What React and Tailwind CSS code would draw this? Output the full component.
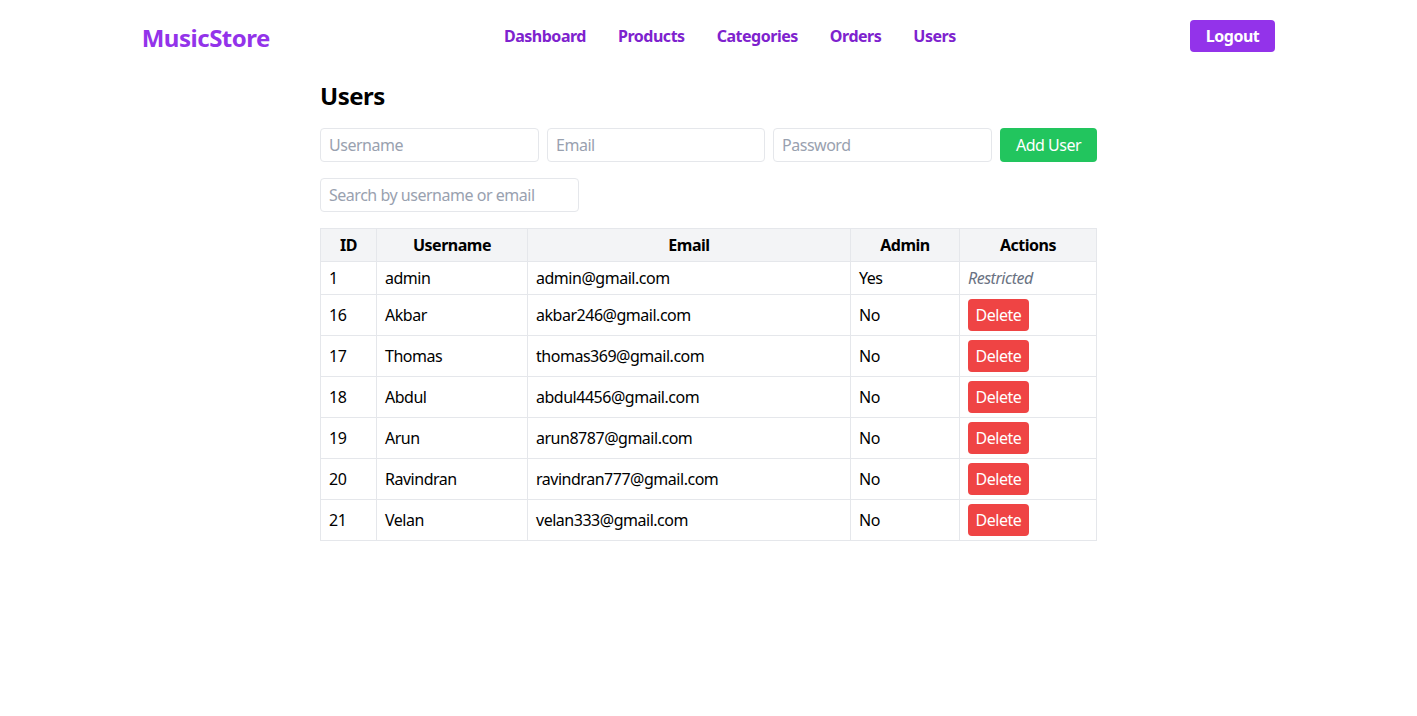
import React from "react";

const users = [
  { id: 1, username: "admin", email: "admin@gmail.com", admin: true },
  { id: 16, username: "Akbar", email: "akbar246@gmail.com", admin: false },
  { id: 17, username: "Thomas", email: "thomas369@gmail.com", admin: false },
  { id: 18, username: "Abdul", email: "abdul4456@gmail.com", admin: false },
  { id: 19, username: "Arun", email: "arun8787@gmail.com", admin: false },
  { id: 20, username: "Ravindran", email: "ravindran777@gmail.com", admin: false },
  { id: 21, username: "Velan", email: "velan333@gmail.com", admin: false },
];

export default function App() {
  return (
    <div className="min-h-screen bg-white text-black tracking-[-0.03em]" style={{ fontFamily: '"Noto Sans", "Open Sans", sans-serif' }}>
      <nav className="flex items-center justify-between px-[10%] py-5">
        <div className="text-2xl font-bold leading-8 text-[#9333ea] translate-y-[2px]">MusicStore</div>
        <div className="flex items-center gap-8 font-bold text-[#7e22ce]">
          <a>Dashboard</a>
          <a>Products</a>
          <a>Categories</a>
          <a>Orders</a>
          <a>Users</a>
        </div>
        <button className="h-8 rounded bg-[#9333ea] px-4 font-bold text-white">Logout</button>
      </nav>

      <main className="mx-auto w-[777px] pt-[8px]">
        <h1 className="mb-4 text-2xl font-bold leading-8">Users</h1>
        <div className="mb-4 flex gap-2">
          <input className="h-[34px] w-[219px] min-w-0 rounded border border-gray-200 px-2 placeholder-gray-400 outline-none" placeholder="Username" />
          <input className="h-[34px] w-[218px] min-w-0 rounded border border-gray-200 px-2 placeholder-gray-400 outline-none" placeholder="Email" />
          <input className="h-[34px] w-[219px] min-w-0 rounded border border-gray-200 px-2 placeholder-gray-400 outline-none" placeholder="Password" />
          <button className="h-[34px] w-[97px] whitespace-nowrap rounded bg-[#22c55e] text-white">Add User</button>
        </div>
        <input className="mb-4 block h-[34px] w-[259px] rounded border border-gray-200 px-2 placeholder-gray-400 outline-none" placeholder="Search by username or email" />

        <table className="w-full border-collapse border border-gray-200">
          <thead>
            <tr className="bg-gray-100">
              <th className="w-[56px] border border-gray-200 px-2 py-1">ID</th>
              <th className="w-[151px] border border-gray-200 px-2 py-1">Username</th>
              <th className="w-[323px] border border-gray-200 px-2 py-1">Email</th>
              <th className="w-[109px] border border-gray-200 px-2 py-1">Admin</th>
              <th className="border border-gray-200 px-2 py-1">Actions</th>
            </tr>
          </thead>
          <tbody>
            {users.map((u) => (
              <tr key={u.id}>
                <td className="border border-gray-200 px-2 py-1">{u.id}</td>
                <td className="border border-gray-200 px-2 py-1">{u.username}</td>
                <td className="border border-gray-200 px-2 py-1">{u.email}</td>
                <td className="border border-gray-200 px-2 py-1">{u.admin ? "Yes" : "No"}</td>
                <td className="border border-gray-200 px-2 py-1">
                  {u.admin ? (
                    <span className="italic text-gray-500">Restricted</span>
                  ) : (
                    <button className="block h-8 w-[61px] rounded bg-[#ef4444] text-white">Delete</button>
                  )}
                </td>
              </tr>
            ))}
          </tbody>
        </table>
      </main>
    </div>
  );
}
